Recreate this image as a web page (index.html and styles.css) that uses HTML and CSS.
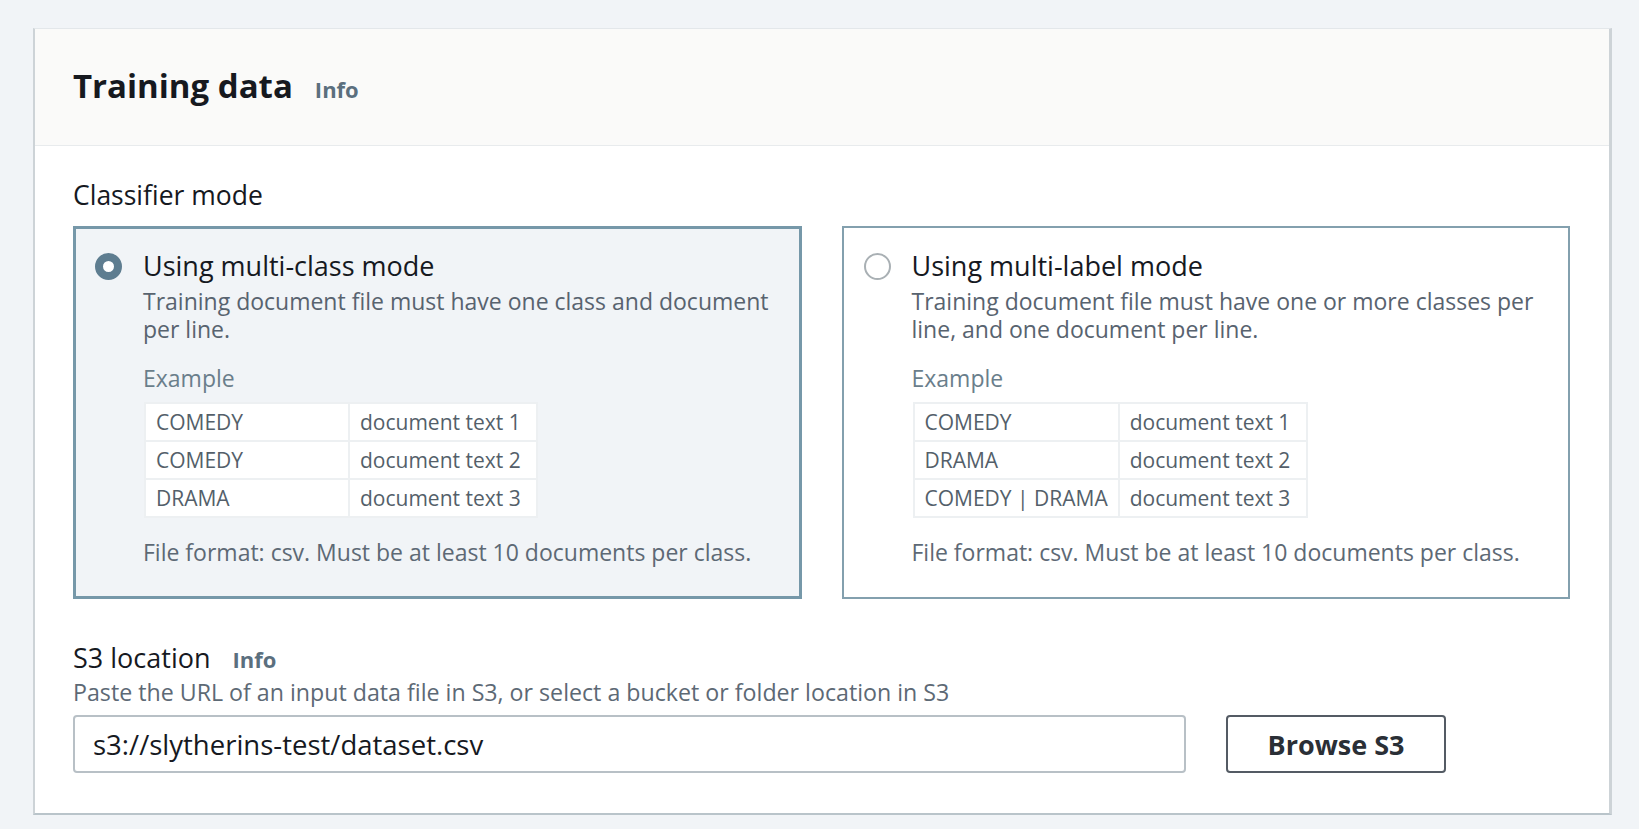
FILE: index.html
```html
<!DOCTYPE html>
<html lang="en">
<head>
<meta charset="utf-8">
<title>Training data</title>
<link rel="stylesheet" href="styles.css">
</head>
<body>
<div class="panel">
  <div class="panel-header">
    <h2 class="panel-title">Training data</h2>
    <span class="info">Info</span>
  </div>
  <div class="panel-body">
    <div class="field-label">Classifier mode</div>
    <div class="tiles">
      <div class="tile tile-selected">
        <span class="radio radio-checked"></span>
        <div class="tile-content">
          <div class="tile-label">Using multi-class mode</div>
          <div class="tile-desc">Training document file must have one class and document per line.</div>
          <div class="example">Example</div>
          <table class="example-table">
            <tr><td>COMEDY</td><td>document text 1</td></tr>
            <tr><td>COMEDY</td><td>document text 2</td></tr>
            <tr><td>DRAMA</td><td>document text 3</td></tr>
          </table>
          <div class="file-format">File format: csv. Must be at least 10 documents per class.</div>
        </div>
      </div>
      <div class="tile">
        <span class="radio"></span>
        <div class="tile-content">
          <div class="tile-label">Using multi-label mode</div>
          <div class="tile-desc">Training document file must have one or more classes per line, and one document per line.</div>
          <div class="example">Example</div>
          <table class="example-table">
            <tr><td>COMEDY</td><td>document text 1</td></tr>
            <tr><td>DRAMA</td><td>document text 2</td></tr>
            <tr><td>COMEDY | DRAMA</td><td>document text 3</td></tr>
          </table>
          <div class="file-format">File format: csv. Must be at least 10 documents per class.</div>
        </div>
      </div>
    </div>
    <div class="s3">
      <div class="s3-label">S3 location <span class="info info-small">Info</span></div>
      <div class="s3-desc">Paste the URL of an input data file in S3, or select a bucket or folder location in S3</div>
      <div class="s3-row">
        <div class="s3-input">s3://slytherins-test/dataset.csv</div>
        <div class="btn">Browse S3</div>
      </div>
    </div>
  </div>
</div>
</body>
</html>
```
FILE: styles.css
```css
* { box-sizing: border-box; }
html, body { margin: 0; }
body {
  background: #f1f4f7;
  padding: 28px 27px 0 33px;
  font-family: "Open Sans", "Noto Sans", sans-serif;
  color: #16191f;
}
.panel {
  background: #ffffff;
  border-top: 1px solid #e3e7ea;
  border-left: 2px solid #cdd3d7;
  border-right: 3px solid #cdd3d7;
  border-bottom: 2px solid #b9c4ca;
}
.panel-header {
  background: #fafaf9;
  border-bottom: 1px solid #e8ebed;
  padding: 37px 38px 39px 38px;
  display: flex;
  align-items: baseline;
  gap: 22px;
}
.panel-title {
  margin: 0;
  font-size: 33px;
  line-height: 40px;
  font-weight: 700;
  color: #16191f;
}
.info {
  font-size: 22px;
  font-weight: 700;
  color: #5b6f7e;
}
.panel-body {
  padding: 34px 39px 40px 38px;
}
.field-label {
  font-size: 26.5px;
  line-height: 30px;
  color: #16191f;
}
.tiles {
  margin-top: 16px;
  display: grid;
  grid-template-columns: 1fr 1fr;
  gap: 40px;
}
.tile {
  display: flex;
  align-items: flex-start;
  border: 2px solid #83a0ae;
  padding: 23px 20px 32px 20px;
  background: #ffffff;
}
.tile-selected {
  border: 3px solid #7698a9;
  background: #f1f4f7;
  padding: 22px 19px 31px 19px;
}
.radio {
  flex: none;
  width: 27px;
  height: 27px;
  border-radius: 50%;
  border: 2px solid #a9b0b4;
  background: #ffffff;
  margin-top: 2px;
  margin-right: 21px;
}
.radio-checked {
  border: 8px solid #5e7d90;
  background: #ffffff;
}
.tile-content {
  flex: 1;
}
.tile-label {
  font-size: 27px;
  line-height: 30px;
  color: #16191f;
}
.tile-desc {
  margin-top: 6px;
  font-size: 23px;
  line-height: 28px;
  color: #58636f;
}
.example {
  margin-top: 22px;
  font-size: 23px;
  line-height: 26px;
  color: #6a7e8b;
}
.example-table {
  margin-top: 11px;
  margin-left: 1px;
  border-collapse: collapse;
  font-size: 21px;
  color: #545f6a;
}
.example-table td {
  border: 2px solid #edf0f2;
  background: #ffffff;
  height: 38px;
  padding: 0 10px;
  line-height: 26px;
  white-space: nowrap;
}
.example-table td:first-child { width: 204px; }
.example-table td:last-child { width: 188px; }
.file-format {
  margin-top: 21px;
  font-size: 23px;
  line-height: 26px;
  color: #5d6975;
}
.s3 {
  margin-top: 44px;
}
.s3-label {
  font-size: 27px;
  line-height: 30px;
  color: #16191f;
}
.info-small {
  margin-left: 15px;
  font-size: 22px;
}
.s3-desc {
  margin-top: 4px;
  font-size: 23.2px;
  line-height: 28px;
  color: #5d6975;
}
.s3-row {
  margin-top: 9px;
  display: flex;
  gap: 40px;
}
.s3-input {
  width: 1113px;
  height: 58px;
  border: 2px solid #b8c0c6;
  border-radius: 4px;
  padding: 0 18px;
  display: flex;
  align-items: center;
  font-size: 27.5px;
  color: #16191f;
}
.btn {
  width: 220px;
  height: 58px;
  border: 2px solid #545b64;
  border-radius: 4px;
  display: flex;
  align-items: center;
  justify-content: center;
  font-size: 27px;
  font-weight: 700;
  color: #2a2f36;
}
```
